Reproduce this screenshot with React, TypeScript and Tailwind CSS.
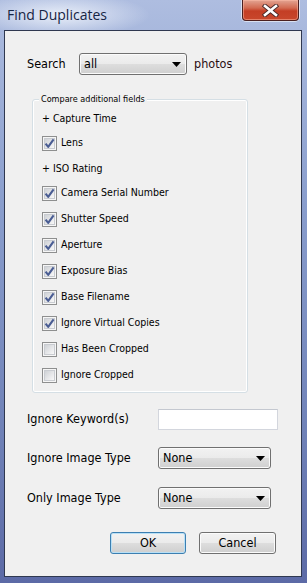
import type { ReactNode } from "react";

type field = {
    label: string;
    kind: "plus" | "on" | "off";
}

const fields: field[] = [
    { label: "Capture Time", kind: "plus" },
    { label: "Lens", kind: "on" },
    { label: "ISO Rating", kind: "plus" },
    { label: "Camera Serial Number", kind: "on" },
    { label: "Shutter Speed", kind: "on" },
    { label: "Aperture", kind: "on" },
    { label: "Exposure Bias", kind: "on" },
    { label: "Base Filename", kind: "on" },
    { label: "Ignore Virtual Copies", kind: "on" },
    { label: "Has Been Cropped", kind: "off" },
    { label: "Ignore Cropped", kind: "off" },
]

const CheckBox = ({ checked }: { checked: boolean }) => (
    <span className="relative flex h-[15px] w-[15px] shrink-0 items-center justify-center border border-[#8e8f8f] bg-[#f6f6f6]">
        <span className="h-[11px] w-[11px] border border-[#c9ccd1] bg-[linear-gradient(135deg,#cfd2d6_0%,#e6e7e9_55%,#f8f8f8_100%)]" />
        {checked && (
            <svg className="absolute left-[-1px] top-[-1px]" width="15" height="15" viewBox="0 0 15 15">
                <path d="M3.6 7.6 L6.2 10.9 L11.6 3.4" fill="none" stroke="#4a5d93" strokeWidth="2.1" strokeLinejoin="round" />
            </svg>
        )}
    </span>
)

// readonly combo in the win7 look, basically a button with an arrow
const Combo = ({ value, className }: { value: string; className: string }) => (
    <div className={`flex h-[22px] items-center justify-between rounded-[3px] border border-[#707070] bg-[linear-gradient(#f2f2f2_0%,#ebebeb_48%,#dddddd_52%,#cfcfcf_100%)] pl-[4px] pr-[5px] shadow-[inset_0_0_0_1px_#fbfbfb] text-[12.5px] text-black ${className}`}>
        <span>{value}</span>
        <svg width="9" height="5" viewBox="0 0 9 5">
            <path d="M0 0 H9 L4.5 5 Z" fill="#000" />
        </svg>
    </div>
)

const Button = ({ children, focused }: { children: ReactNode; focused?: boolean }) => (
    <div
        className={
            focused
                ? "flex h-[22px] w-[76px] items-center justify-center rounded-[3px] border border-[#3c7fb1] bg-[linear-gradient(#f2f2f2_0%,#ebebeb_48%,#dddddd_52%,#cfcfcf_100%)] shadow-[inset_0_0_0_1px_#b9e0f6] text-[12.5px] text-black"
                : "flex h-[22px] w-[77px] items-center justify-center rounded-[3px] border border-[#707070] bg-[linear-gradient(#f2f2f2_0%,#ebebeb_48%,#dddddd_52%,#cfcfcf_100%)] shadow-[inset_0_0_0_1px_#fbfbfb] text-[12.5px] text-black"
        }
    >
        {children}
    </div>
)

export default function App() {
    return (
        <div className="flex h-[583px] w-[307px] flex-col overflow-hidden bg-[linear-gradient(180deg,#aebde0_0%,#8a9ecd_35%,#6f81b7_75%,#5c6aa6_100%)] font-['DejaVu_Sans_Condensed','DejaVu_Sans',sans-serif]">
            {/* title bar */}
            <div className="flex h-[30px] shrink-0 items-start bg-[radial-gradient(ellipse_90px_22px_at_60px_15px,rgba(236,241,250,0.95),rgba(236,241,250,0)_100%)]">
                <div className="mt-[4px] ml-[7px] font-['Open_Sans',sans-serif] text-[14px] text-[#162544]">Find Duplicates</div>
                <div className="ml-auto mr-[8px] flex h-[21px] w-[57px] items-center justify-center rounded-b-[4px] border border-t-0 border-[#4b2020] bg-[linear-gradient(#e3a593_0%,#d26a51_40%,#c43e25_55%,#c8472c_100%)] shadow-[0_0_0_1px_rgba(255,255,255,0.55),inset_0_0_0_1px_rgba(255,190,170,0.5)]">
                    <svg width="17" height="13" viewBox="0 0 17 13">
                        <path d="M3 2 L14 11 M14 2 L3 11" stroke="#4a2a2a" strokeWidth="4.4" strokeLinecap="square" />
                        <path d="M3 2 L14 11 M14 2 L3 11" stroke="#ffffff" strokeWidth="2.6" strokeLinecap="square" />
                    </svg>
                </div>
            </div>

            {/* client area */}
            <div className="ml-[4px] h-[547px] w-[298px] border border-[#2f3850] bg-[#f0f0f0] text-black">
                <div className="mt-[22px] flex items-center pl-[22px]">
                    <div className="w-[52px] text-[12.5px]">Search</div>
                    <Combo value="all" className="w-[108px]" />
                    <div className="ml-[7px] text-[12.5px] text-[#2a0d12]">photos</div>
                </div>

                <div className="relative mt-[24px] ml-[27px] w-[216px] rounded-[3px] border border-[#d5dfe5] pt-[7px] pb-[3px] shadow-[inset_0_0_0_1px_#ffffff]">
                    <span className="absolute left-[6px] top-[-8px] bg-[#f0f0f0] px-[2px] text-[9px] leading-[14px]">Compare additional fields</span>
                    {fields.map((f, index) =>
                        f.kind === "plus" ? (
                            <div key={`${index}-${f.label}`} className="flex h-[24px] items-center pl-[9px] text-[10.5px]">
                                + {f.label}
                            </div>
                        ) : (
                            <div key={`${index}-${f.label}`} className="flex h-[26px] items-center gap-[4px] pb-[2px] pl-[9px] text-[10.5px]">
                                <CheckBox checked={f.kind === "on"} />
                                <span>{f.label}</span>
                            </div>
                        )
                    )}
                </div>

                <div className="mt-[16px] flex items-center pl-[22px]">
                    <div className="w-[131px] text-[12.5px]">Ignore Keyword(s)</div>
                    <div className="h-[21px] w-[120px] border border-[#d3d6dd] border-t-[#c4c8d0] bg-white" />
                </div>
                <div className="mt-[17px] flex items-center pl-[22px]">
                    <div className="w-[131px] text-[12.5px]">Ignore Image Type</div>
                    <Combo value="None" className="w-[113px]" />
                </div>
                <div className="mt-[18px] flex items-center pl-[22px]">
                    <div className="w-[131px] text-[12.5px]">Only Image Type</div>
                    <Combo value="None" className="w-[113px]" />
                </div>

                <div className="mt-[23px] flex gap-[13px] pl-[105px]">
                    <Button focused>OK</Button>
                    <Button>Cancel</Button>
                </div>
            </div>
        </div>
    )
}
